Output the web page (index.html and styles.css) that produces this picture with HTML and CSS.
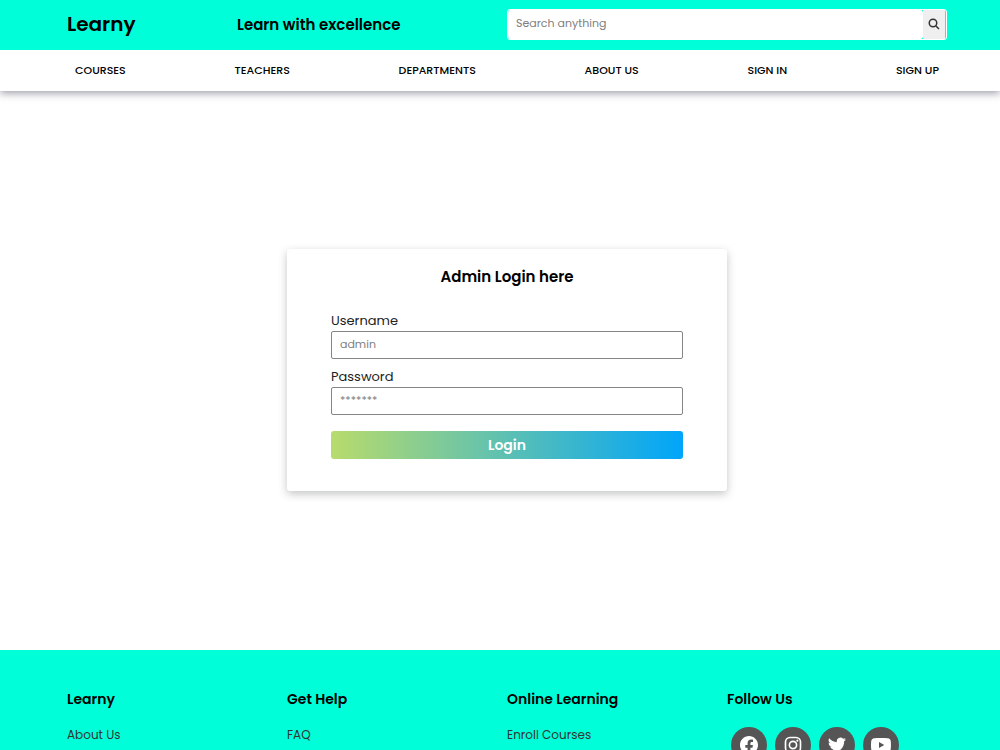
FILE: index.html
```
<!DOCTYPE html>
<html lang="en">
<head>
    <meta charset="UTF-8">
    <meta name="viewport" content="width=device-width, initial-scale=1.0">
    <title>Learny - Admin Login</title>
    <link rel="stylesheet" href="styles.css">
</head>
<body>
    <header>
        <div class="header-top">
            <h1 class="logo">Learny</h1>
            <h2 class="tagline">Learn with excellence</h2>
            <form class="search">
                <input type="search" placeholder="Search anything" aria-label="Search anything">
                <button type="submit" aria-label="Search">
                    <svg viewBox="0 0 24 24" width="12" height="12" fill="none" stroke="#333" stroke-width="3">
                        <circle cx="10" cy="10" r="7.5"/>
                        <path d="M15.5 15.5L22 22"/>
                    </svg>
                </button>
            </form>
        </div>
        <nav class="navbar">
            <a href="#">COURSES</a>
            <a href="#">TEACHERS</a>
            <a href="#">DEPARTMENTS</a>
            <a href="#">ABOUT US</a>
            <a href="#">SIGN IN</a>
            <a href="#">SIGN UP</a>
        </nav>
    </header>

    <main>
        <form class="login-card">
            <h2>Admin Login here</h2>
            <label for="username">Username</label>
            <input type="text" id="username" placeholder="admin">
            <label for="password">Password</label>
            <input type="password" id="password" placeholder="*******">
            <button type="submit">Login</button>
        </form>
    </main>

    <footer>
        <div class="footer-col">
            <h3>Learny</h3>
            <a href="#">About Us</a>
        </div>
        <div class="footer-col">
            <h3>Get Help</h3>
            <a href="#">FAQ</a>
        </div>
        <div class="footer-col">
            <h3>Online Learning</h3>
            <a href="#">Enroll Courses</a>
        </div>
        <div class="footer-col">
            <h3>Follow Us</h3>
            <div class="social">
                <a href="#" aria-label="Facebook">
                    <svg viewBox="0 0 24 24" width="18" height="18" fill="#fff">
                        <path d="M24 12.07C24 5.4 18.63 0 12 0S0 5.4 0 12.07C0 18.1 4.39 23.1 10.13 24v-8.44H7.08v-3.49h3.05V9.41c0-3.02 1.79-4.69 4.53-4.69 1.31 0 2.68.24 2.68.24v2.97h-1.51c-1.49 0-1.96.93-1.96 1.89v2.25h3.33l-.53 3.49h-2.8V24C19.61 23.1 24 18.1 24 12.07z"/>
                    </svg>
                </a>
                <a href="#" aria-label="Instagram">
                    <svg viewBox="0 0 24 24" width="18" height="18" fill="none" stroke="#fff" stroke-width="2.2">
                        <rect x="2" y="2" width="20" height="20" rx="6"/>
                        <circle cx="12" cy="12" r="4.8"/>
                        <circle cx="17.8" cy="6.2" r="1.4" fill="#fff" stroke="none"/>
                    </svg>
                </a>
                <a href="#" aria-label="Twitter">
                    <svg viewBox="0 0 24 24" width="18" height="18" fill="#fff">
                        <path d="M23.95 4.57a10 10 0 0 1-2.82.77 4.96 4.96 0 0 0 2.16-2.72c-.95.55-2 .95-3.13 1.18a4.92 4.92 0 0 0-8.38 4.48C7.69 8.1 4.07 6.13 1.64 3.16a4.92 4.92 0 0 0 1.52 6.57 4.9 4.9 0 0 1-2.23-.61v.06a4.92 4.92 0 0 0 3.95 4.83 5 5 0 0 1-2.21.08 4.94 4.94 0 0 0 4.6 3.42A9.87 9.87 0 0 1 0 19.54a13.99 13.99 0 0 0 7.55 2.21c9.05 0 14-7.5 14-13.98 0-.21 0-.42-.02-.63a9.94 9.94 0 0 0 2.42-2.57z"/>
                    </svg>
                </a>
                <a href="#" aria-label="YouTube">
                    <svg viewBox="0 0 24 24" width="20" height="20" fill="#fff">
                        <path d="M23.5 6.2a3 3 0 0 0-2.1-2.1C19.5 3.5 12 3.5 12 3.5s-7.5 0-9.4.6A3 3 0 0 0 .5 6.2C0 8.1 0 12 0 12s0 3.9.5 5.8a3 3 0 0 0 2.1 2.1c1.9.6 9.4.6 9.4.6s7.5 0 9.4-.6a3 3 0 0 0 2.1-2.1c.5-1.9.5-5.8.5-5.8s0-3.9-.5-5.8zM9.6 15.6V8.4l6.3 3.6z"/>
                    </svg>
                </a>
            </div>
        </div>
    </footer>
</body>
</html>
```
FILE: styles.css
```
* {
    margin: 0;
    padding: 0;
    box-sizing: border-box;
    font-family: Poppins, Inter, sans-serif;
}
body {
    background-color: #fff;
    color: #000;
}
a {
    text-decoration: none;
}

/* header */
header {
    box-shadow: 0 2px 8px rgba(50, 50, 80, 0.5);
}
.header-top {
    display: grid;
    grid-template-columns: 170px 1fr 50%;
    align-items: center;
    height: 50px;
    padding: 0 53px 2px 67px;
    background-color: #00ffd9;
}
.logo {
    font-size: 20px;
    font-weight: 600;
}
.tagline {
    font-size: 15px;
    font-weight: 600;
}
.search {
    display: flex;
    height: 31px;
    padding-right: 1px;
    border: 1px solid #fff;
    border-radius: 3px;
}
.search input {
    flex: 1;
    min-width: 0;
    padding: 0 8px 2px;
    border: none;
    border-radius: 3px;
    font-size: 11px;
    background-color: #fff;
}
.search button {
    display: flex;
    align-items: center;
    justify-content: center;
    width: 22px;
    border: none;
    background-color: #efefef;
    cursor: pointer;
}
input::placeholder {
    color: #808080;
}
.navbar {
    display: flex;
    align-items: center;
    justify-content: space-between;
    height: 41px;
    padding: 0 61px 0 75px;
}
.navbar a {
    font-size: 11px;
    font-weight: 500;
    color: #000;
}

/* login */
main {
    padding: 158px 53px 159px 67px;
}
.login-card {
    display: flex;
    flex-direction: column;
    width: 50%;
    margin: 0 auto;
    padding: 16px 44px 32px;
    border-radius: 3px;
    background-color: #fff;
    box-shadow: 0 3px 8px rgba(60, 64, 67, 0.3);
}
.login-card h2 {
    margin-bottom: 22px;
    font-size: 15px;
    font-weight: 600;
    line-height: 24px;
    text-align: center;
}
.login-card label {
    font-size: 13px;
    line-height: 20px;
    color: #222;
}
.login-card input {
    height: 28px;
    margin-bottom: 8px;
    padding: 0 8px 2px;
    border: 1px solid #858585;
    border-radius: 2px;
    font-size: 11px;
}
.login-card button {
    height: 28px;
    margin-top: 8px;
    border: none;
    border-radius: 3px;
    font-size: 14px;
    font-weight: 600;
    color: #fff;
    background: linear-gradient(to right, #b8db6c, #00a5fa);
    cursor: pointer;
}

/* footer */
footer {
    display: grid;
    grid-template-columns: repeat(4, 1fr);
    padding: 38px 53px 38px 67px;
    background-color: #00ffd9;
}
.footer-col h3 {
    margin-bottom: 14px;
    font-size: 14px;
    font-weight: 600;
    line-height: 22px;
}
.footer-col > a {
    display: block;
    font-size: 12px;
    line-height: 22px;
    color: #333;
}
.social {
    display: flex;
    gap: 8px;
    padding: 3px 4px;
}
.social a {
    display: flex;
    align-items: center;
    justify-content: center;
    width: 36px;
    height: 36px;
    border-radius: 50%;
    background-color: #555;
}
```
